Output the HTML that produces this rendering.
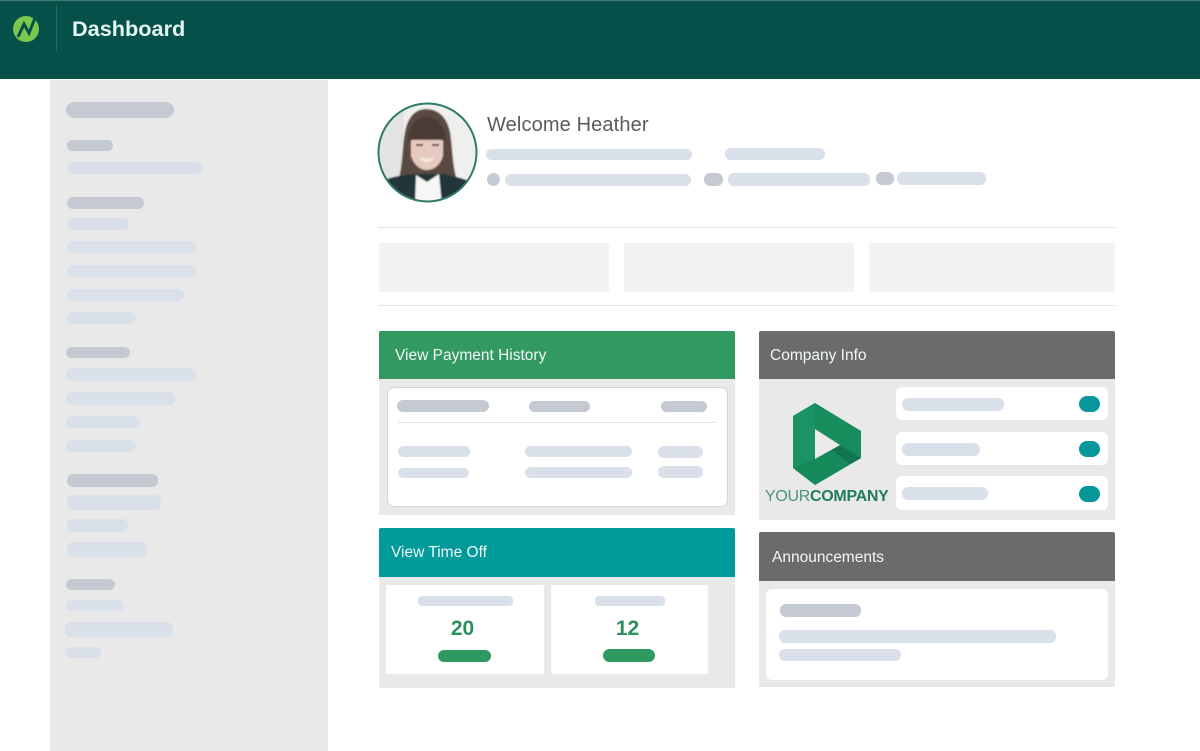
<!DOCTYPE html>
<html lang="en">
<head>
<meta charset="utf-8">
<title>Dashboard</title>
<style>
html,body{margin:0;padding:0;background:#fff;}
body{width:1200px;height:751px;overflow:hidden;position:relative;font-family:"Liberation Sans",sans-serif;}
div,svg,span{position:absolute;display:block;}
.l{background:#d9e0e9;border-radius:6px;}
.d{background:#c5cad2;border-radius:6px;}
.g{background:#e9e9e9;}
.w{background:#fff;border-radius:6px;}
.f{background:#f2f2f2;border-radius:2px;}
.h{color:#f0f7f4;font-size:15.5px;line-height:20px;white-space:nowrap;}
.t{background:#06979a;border-radius:7px;}
.n{color:#2d8f60;font-weight:bold;font-size:21px;line-height:24px;text-align:center;}
.p{background:#2e9960;border-radius:7px;}
</style>
</head>
<body>
<div style="left:0;top:0;width:1200px;height:79px;background:#06504a;"></div>
<div style="left:0;top:0;width:1200px;height:1px;background:#3f7a74;"></div>
<div style="left:56px;top:5px;width:1px;height:46px;background:#2a6a63;"></div>
<svg style="left:12px;top:13px;" width="28" height="32" viewBox="0 0 28 32">
<circle cx="14" cy="16" r="13" fill="#7cc74c"/>
<path d="M6 24 L12 11 L17 20 L23 5" fill="none" stroke="#06504a" stroke-width="3"/>
</svg>
<div style="left:72px;top:15px;color:#e4f5f2;font-size:21.7px;line-height:28px;font-weight:bold;white-space:nowrap;">Dashboard</div>

<div class="g" style="left:50px;top:80px;width:278px;height:671px;"></div>
<div class="d" style="left:66px;top:102px;width:108px;height:16px;border-radius:8px;"></div>
<div class="d" style="left:67px;top:140px;width:46px;height:11px;"></div>
<div class="l" style="left:67px;top:162px;width:135px;height:12px;"></div>
<div class="d" style="left:67px;top:197px;width:77px;height:12px;"></div>
<div class="l" style="left:67px;top:218px;width:62px;height:12px;"></div>
<div class="l" style="left:67px;top:241px;width:129px;height:12px;"></div>
<div class="l" style="left:67px;top:265px;width:129px;height:12px;"></div>
<div class="l" style="left:67px;top:289px;width:117px;height:12px;"></div>
<div class="l" style="left:67px;top:312px;width:69px;height:12px;"></div>
<div class="d" style="left:66px;top:347px;width:64px;height:11px;"></div>
<div class="l" style="left:66px;top:368px;width:130px;height:13px;"></div>
<div class="l" style="left:66px;top:392px;width:109px;height:13px;"></div>
<div class="l" style="left:66px;top:416px;width:74px;height:12px;"></div>
<div class="l" style="left:66px;top:440px;width:70px;height:12px;"></div>
<div class="d" style="left:67px;top:474px;width:91px;height:13px;"></div>
<div class="l" style="left:67px;top:495px;width:94px;height:15px;"></div>
<div class="l" style="left:67px;top:519px;width:61px;height:13px;"></div>
<div class="l" style="left:67px;top:542px;width:80px;height:15px;"></div>
<div class="d" style="left:66px;top:579px;width:49px;height:11px;"></div>
<div class="l" style="left:66px;top:600px;width:58px;height:11px;"></div>
<div class="l" style="left:65px;top:622px;width:108px;height:15px;"></div>
<div class="l" style="left:66px;top:647px;width:35px;height:11px;"></div>

<svg style="left:377px;top:102px;" width="101" height="101" viewBox="0 0 101 101">
<defs>
<clipPath id="c"><circle cx="50.5" cy="50.5" r="48.5"/></clipPath>
<filter id="s" x="-5%" y="-5%" width="110%" height="110%"><feGaussianBlur stdDeviation="0.8"/></filter>
</defs>
<g clip-path="url(#c)">
<g filter="url(#s)">
<rect x="-3" y="-3" width="107" height="107" fill="#efefed"/>
<rect x="-3" y="-3" width="30" height="107" fill="#e3e4e2"/>
<path d="M21 80 C26 62 25 46 28 30 C31 13 40 7 49 7 C61 7 70 15 73 30 C76 48 75 66 82 84 L60 90 L36 90 Z" fill="#5a4842"/>
<path d="M34 38 L66 38 L66 54 C63 64 56 68 50 68 C43 68 37 63 34 54 Z" fill="#e6cabf"/>
<path d="M31 39 C32 22 40 15 49 15 C59 15 68 22 69 39 C58 36 43 36 31 39 Z" fill="#4b3b36"/>
<path d="M39 43 L46 43 M55 43 L62 43" stroke="#5b4640" stroke-width="2"/>
<path d="M42 55 C47 57 53 57 58 55 C55 62 45 62 42 55 Z" fill="#f4e6e2"/>
<path d="M8 78 C16 74 28 73 38 72 L66 72 C76 74 86 76 94 80 L94 104 L8 104 Z" fill="#20343a"/>
<path d="M38 104 L39 73 L50 80 L62 72 L65 104 Z" fill="#f6f6f4"/>
</g>
</g>
<circle cx="50.5" cy="50.5" r="49" fill="none" stroke="#2f7a68" stroke-width="2"/>
</svg>
<div style="left:487px;top:113px;color:#5b5b5b;font-size:20px;line-height:24px;white-space:nowrap;letter-spacing:.13px;">Welcome Heather</div>
<div class="l" style="left:486px;top:149px;width:206px;height:11px;"></div>
<div class="l" style="left:725px;top:148px;width:100px;height:12px;"></div>
<div class="d" style="left:487px;top:173px;width:13px;height:13px;border-radius:50%;"></div>
<div class="l" style="left:505px;top:174px;width:186px;height:12px;"></div>
<div class="d" style="left:704px;top:173px;width:19px;height:13px;"></div>
<div class="l" style="left:728px;top:173px;width:142px;height:13px;"></div>
<div class="d" style="left:876px;top:172px;width:18px;height:13px;"></div>
<div class="l" style="left:897px;top:172px;width:89px;height:13px;"></div>

<div style="left:378px;top:227px;width:737px;height:1px;background:#e2e2e2;"></div>
<div class="f" style="left:379px;top:243px;width:230px;height:49px;"></div>
<div class="f" style="left:624px;top:243px;width:230px;height:49px;"></div>
<div class="f" style="left:869px;top:243px;width:246px;height:49px;"></div>
<div style="left:378px;top:305px;width:737px;height:1px;background:#e2e2e2;"></div>

<div class="g" style="left:379px;top:379px;width:356px;height:136px;"></div>
<div style="left:379px;top:331px;width:356px;height:48px;background:#339963;border-radius:2px 2px 0 0;"></div>
<div class="h" style="left:395px;top:346px;">View Payment History</div>
<div class="w" style="left:388px;top:388px;width:339px;height:118px;box-shadow:0 0 0 1px #d4d4d4;"></div>
<div class="d" style="left:397px;top:400px;width:92px;height:12px;"></div>
<div class="d" style="left:529px;top:401px;width:61px;height:11px;"></div>
<div class="d" style="left:661px;top:401px;width:46px;height:11px;"></div>
<div style="left:398px;top:422px;width:318px;height:1px;background:#dfe2e6;"></div>
<div class="l" style="left:398px;top:446px;width:72px;height:11px;"></div>
<div class="l" style="left:525px;top:446px;width:107px;height:11px;"></div>
<div class="l" style="left:658px;top:446px;width:45px;height:12px;"></div>
<div class="l" style="left:398px;top:468px;width:71px;height:10px;"></div>
<div class="l" style="left:525px;top:467px;width:107px;height:11px;"></div>
<div class="l" style="left:658px;top:466px;width:45px;height:12px;"></div>

<div class="g" style="left:379px;top:577px;width:356px;height:111px;"></div>
<div style="left:379px;top:528px;width:356px;height:49px;background:#009a9b;border-radius:2px 2px 0 0;"></div>
<div class="h" style="left:391px;top:543px;">View Time Off</div>
<div class="w" style="left:386px;top:585px;width:158px;height:89px;border-radius:2px;"></div>
<div class="w" style="left:551px;top:585px;width:157px;height:89px;border-radius:2px;"></div>
<div class="l" style="left:418px;top:596px;width:95px;height:10px;border-radius:4px;"></div>
<div class="l" style="left:595px;top:596px;width:70px;height:10px;border-radius:4px;"></div>
<div class="n" style="left:386px;top:617px;width:153px;">20</div>
<div class="n" style="left:551px;top:617px;width:153px;">12</div>
<div class="p" style="left:438px;top:650px;width:53px;height:12px;"></div>
<div class="p" style="left:603px;top:649px;width:52px;height:13px;"></div>

<div class="g" style="left:759px;top:379px;width:356px;height:141px;"></div>
<div style="left:759px;top:331px;width:356px;height:48px;background:#6b6b6b;border-radius:2px 2px 0 0;"></div>
<div class="h" style="left:770px;top:346px;">Company Info</div>
<svg style="left:790px;top:400px;" width="74" height="88" viewBox="0 0 74 88">
<path d="M3 16 L25 3 L71 31 L71 58 L25 85 L3 68 Z" fill="#178c5d"/>
<path d="M3 16 L25 3 L25 59 L3 68 Z" fill="#1a9464"/>
<path d="M50 45 L71 58 L25 85 L3 68 L25 59 Z" fill="#168a5b"/>
<path d="M50 45 L71 58 L60 64 L42 50 Z" fill="#107650"/>
<path d="M25 29 L50 45 L25 59 Z" fill="#ebebeb"/>
</svg>
<div style="left:765px;top:487px;width:125px;font-size:16px;line-height:20px;color:#4d9478;white-space:nowrap;letter-spacing:-.3px;">YOUR<b style="color:#1f7d5b;">COMPANY</b></div>
<div class="w" style="left:896px;top:387px;width:212px;height:33px;"></div>
<div class="w" style="left:896px;top:432px;width:212px;height:33px;"></div>
<div class="w" style="left:896px;top:476px;width:212px;height:34px;"></div>
<div class="l" style="left:902px;top:398px;width:102px;height:13px;"></div>
<div class="l" style="left:902px;top:443px;width:78px;height:13px;"></div>
<div class="l" style="left:902px;top:487px;width:86px;height:13px;"></div>
<div class="t" style="left:1079px;top:396px;width:21px;height:16px;border-radius:8px;"></div>
<div class="t" style="left:1079px;top:441px;width:21px;height:16px;border-radius:8px;"></div>
<div class="t" style="left:1079px;top:486px;width:21px;height:16px;border-radius:8px;"></div>

<div class="g" style="left:759px;top:581px;width:356px;height:106px;"></div>
<div style="left:759px;top:532px;width:356px;height:49px;background:#6b6b6b;border-radius:2px 2px 0 0;"></div>
<div class="h" style="left:772px;top:548px;">Announcements</div>
<div class="w" style="left:766px;top:589px;width:342px;height:91px;"></div>
<div class="d" style="left:780px;top:604px;width:81px;height:13px;"></div>
<div class="l" style="left:779px;top:630px;width:277px;height:13px;"></div>
<div class="l" style="left:779px;top:649px;width:122px;height:12px;"></div>
</body>
</html>
